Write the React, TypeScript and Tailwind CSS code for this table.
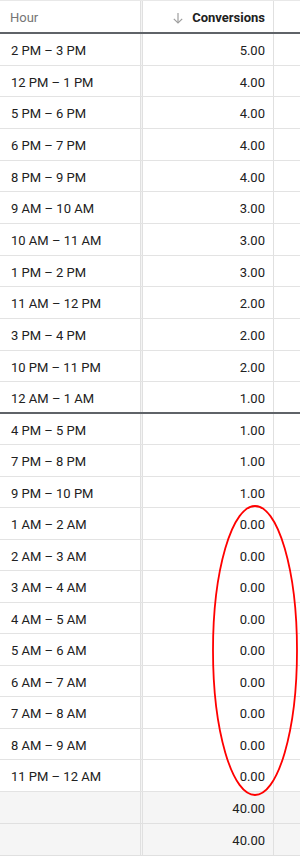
import React from "react";

const rowsA = [
  ["2 PM – 3 PM", "5.00"],
  ["12 PM – 1 PM", "4.00"],
  ["5 PM – 6 PM", "4.00"],
  ["6 PM – 7 PM", "4.00"],
  ["8 PM – 9 PM", "4.00"],
  ["9 AM – 10 AM", "3.00"],
  ["10 AM – 11 AM", "3.00"],
  ["1 PM – 2 PM", "3.00"],
  ["11 AM – 12 PM", "2.00"],
  ["3 PM – 4 PM", "2.00"],
  ["10 PM – 11 PM", "2.00"],
  ["12 AM – 1 AM", "1.00"],
];
const rowsB = [
  ["4 PM – 5 PM", "1.00"],
  ["7 PM – 8 PM", "1.00"],
  ["9 PM – 10 PM", "1.00"],
  ["1 AM – 2 AM", "0.00"],
  ["2 AM – 3 AM", "0.00"],
  ["3 AM – 4 AM", "0.00"],
  ["4 AM – 5 AM", "0.00"],
  ["5 AM – 6 AM", "0.00"],
  ["6 AM – 7 AM", "0.00"],
  ["7 AM – 8 AM", "0.00"],
  ["8 AM – 9 AM", "0.00"],
  ["11 PM – 12 AM", "0.00"],
];

function Row({ label, value, last, tall }: { label: string; value: string; last?: boolean; tall?: boolean }) {
  return (
    <div
      className={
        "flex box-border bg-white " +
        (tall ? "h-[31.67px] " : "h-[31.5px] ") +
        (last ? "border-b-2 border-[#5f6368]" : "border-b border-[#e3e3e3]")
      }
    >
      <div className="w-[141px] pl-[11px] pt-[3px] flex items-center text-[13px] text-[#212121] border-r border-[#e0e0e0]">{label}</div>
      <div className="w-[2px] bg-[#f4f4f4] border-r border-[#e0e0e0]" />
      <div className="w-[131px] pr-[8px] pt-[3px] flex items-center justify-end text-[13px] text-[#212121] border-r border-[#e0e0e0]">{value}</div>
      <div className="flex-1" />
    </div>
  );
}

function TotalRow({ value }: { value: string }) {
  return (
    <div className="flex box-border h-[32px] border-b border-[#e0e0e0] bg-[#f5f5f5]">
      <div className="w-[141px] border-r border-[#e0e0e0]" />
      <div className="w-[2px] bg-[#f4f4f4] border-r border-[#e0e0e0]" />
      <div className="w-[131px] pr-[8px] pt-[3px] flex items-center justify-end text-[13px] text-[#212121] border-r border-[#e0e0e0]">{value}</div>
      <div className="flex-1" />
    </div>
  );
}

export default function App() {
  return (
    <div
      className="relative w-[300px] h-[859px] overflow-hidden bg-white"
      style={{ fontFamily: "Roboto, 'Liberation Sans', sans-serif" }}
    >
      <div className="flex box-border h-[34px] border-t border-[#e8e8e8] border-b-2 border-b-[#5f6368] bg-white">
        <div className="w-[141px] pl-[10px] pt-[2px] flex items-center text-[13px] text-[#757575] border-r border-[#e0e0e0]">Hour</div>
        <div className="w-[2px] bg-[#f4f4f4] border-r border-[#e0e0e0]" />
        <div className="w-[131px] pr-[8px] pt-[2px] flex items-center justify-end gap-[8px] text-[13px] border-r border-[#e0e0e0]">
          <svg width="12" height="12" viewBox="0 0 12 12" fill="none" stroke="#9e9e9e" strokeWidth="1.2">
            <path d="M6 1 V11" />
            <path d="M1.8 6.8 L6 11 L10.2 6.8" />
          </svg>
          <span className="font-bold text-[#212121]">Conversions</span>
        </div>
        <div className="flex-1" />
      </div>
      {rowsA.map((r, i) => (
        <Row key={"a" + i} label={r[0]} value={r[1]} tall last={i === rowsA.length - 1} />
      ))}
      {rowsB.map((r, i) => (
        <Row key={"b" + i} label={r[0]} value={r[1]} />
      ))}
      <TotalRow value="40.00" />
      <TotalRow value="40.00" />
      <svg className="absolute left-0 top-0 pointer-events-none" width="300" height="859">
        <ellipse cx="255" cy="650.5" rx="42" ry="144.5" fill="none" stroke="#ff0000" strokeWidth="1.8" />
      </svg>
    </div>
  );
}
